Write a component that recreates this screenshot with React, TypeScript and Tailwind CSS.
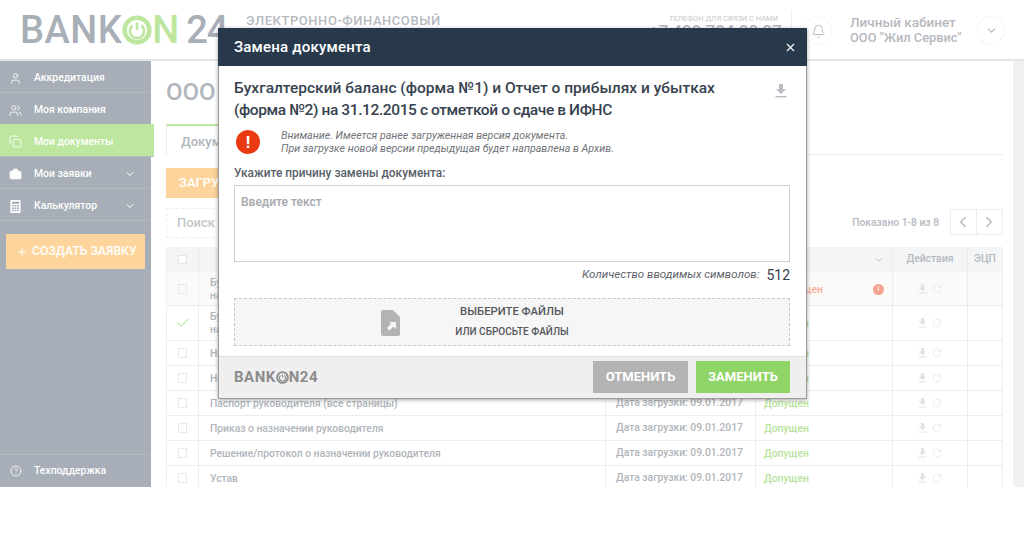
import { Bell, Briefcase, Check, ChevronDown, ChevronLeft, ChevronRight, CircleHelp, Copy, Plus, RotateCw, User, Users, X } from "lucide-react";

const FONT = "font-['Roboto','Noto_Sans',sans-serif]";

function DownloadIcon({ className }: { className?: string }) {
  return (
    <svg viewBox="0 0 12 14" className={className} fill="currentColor">
      <path d="M4 0h4v5h3L6 10 1 5h3z" />
      <rect x="0.5" y="12" width="11" height="1.4" />
    </svg>
  );
}

function PowerMark({ size, color }: { size: number; color: string }) {
  return (
    <svg width={size} height={size} viewBox="0 0 40 40" fill="none" stroke={color} className="shrink-0">
      <circle cx="20" cy="20" r="16.5" strokeWidth="6" />
      <path d="M14 14a9.5 9.5 0 1 0 12 0" strokeWidth="3.5" />
      <path d="M20 10v10" strokeWidth="3.5" />
    </svg>
  );
}

function BriefcaseSolid({ size }: { size: number }) {
  return <Briefcase size={size} strokeWidth={1.6} fill="currentColor" className="shrink-0" />;
}

function CalculatorSolid({ size }: { size: number }) {
  return (
    <svg width={size} height={size} viewBox="0 0 12 14" className="shrink-0" fill="currentColor">
      <path d="M1.5 0h9A1 1 0 0 1 11.500 1v12a1 1 0 0 1-1 1h-9a1 1 0 0 1-1-1V1a1 1 0 0 1 1-1z" />
      <rect x="2.200" y="1.800" width="7.600" height="2.400" fill="#a7aeb7" />
      <path d="M2.200 5.500h2v1.600h-2zM5 5.500h2v1.600H5zM7.800 5.500h2v1.600h-2zM2.200 8h2v1.600h-2zM5 8h2v1.600H5zM7.800 8h2v1.600h-2zM2.200 10.500h2v1.600h-2zM5 10.500h2v1.600H5zM7.800 10.500h2v1.600h-2z" fill="#a7aeb7" />
    </svg>
  );
}

const menu = [
  { label: "Аккредитация", icon: <User size={13} strokeWidth={1.6} className="shrink-0" />, h: "h-[32px]" },
  { label: "Моя компания", icon: <Users size={13} strokeWidth={1.6} className="shrink-0" />, h: "h-[32px]" },
  { label: "Мои документы", icon: <Copy size={13} strokeWidth={1.6} className="shrink-0" />, h: "h-[33px]", active: true },
  { label: "Мои заявки", icon: <BriefcaseSolid size={13} />, h: "h-[32px]", arrow: true },
  { label: "Калькулятор", icon: <CalculatorSolid size={13} />, h: "h-[32px]", arrow: true },
];

const rows = [
  { name: "Бухгалтерский баланс", sub: "на 31.12.2015", date: "", status: "Не допущен", h: "h-[34px]", tint: true },
  { name: "Бухгалтерский баланс", sub: "на 31.12.2015", date: "", status: "Допущен", h: "h-[35px]", checked: true },
  { name: "Налоговая декларация", date: "", status: "Допущен", h: "h-[25px]" },
  { name: "Налоговая декларация", date: "", status: "Допущен", h: "h-[25px]" },
  { name: "Паспорт руководителя (все страницы)", date: "Дата загрузки: 09.01.2017", status: "Допущен", h: "h-[25px]" },
  { name: "Приказ о назначении руководителя", date: "Дата загрузки: 09.01.2017", status: "Допущен", h: "h-[25px]" },
  { name: "Решение/протокол о назначении руководителя", date: "Дата загрузки: 09.01.2017", status: "Допущен", h: "h-[25px]" },
  { name: "Устав", date: "Дата загрузки: 09.01.2017", status: "Допущен", h: "h-[25px]" },
];

function Header() {
  return (
    <header className="h-[61px] shrink-0 flex border-b-2 border-[#e3e4e6] bg-white relative">
      <div className="w-[246px] shrink-0 pl-[20px] pt-[7px] flex items-center h-[52px] font-medium text-[38px] leading-none">
        <span className="text-[#a9afb7] tracking-[0.5px]">BANK</span>
        <PowerMark size={30} color="#bde69e" />
        <span className="text-[#bde69e]">N</span>
        <span className="text-[#a9afb7] ml-[7px] tracking-[-1px]">24</span>
      </div>
      <div className="pt-[13px] text-[13px] leading-[16px] tracking-[0.55px] text-[#b5b9bf] font-medium w-[240px]">
        ЭЛЕКТРОННО-ФИНАНСОВЫЙ
      </div>
      <div className="ml-auto flex">
        <div className="text-right w-[130px] pt-[14px] pr-[1px]">
          <div className="text-[7.5px] leading-[9px] text-[#c5c8cc]">ТЕЛЕФОН ДЛЯ СВЯЗИ С НАМИ</div>
          <div className="text-[17px] leading-[16px] font-medium text-[#b5b9bf] whitespace-nowrap">+7 499 704 00 07</div>
        </div>
        <div className="w-px h-[44px] bg-[#eee] mt-[10px] ml-[12px]" />
        <div className="w-[28px] h-[28px] rounded-full border border-dashed border-[#eee] mt-[17px] ml-[12px] flex items-center justify-center text-[#b5b9bf]">
          <Bell size={15} strokeWidth={1.5} />
        </div>
        <div className="w-[127px] ml-[18px] pt-[15px] leading-[15px] font-medium text-[#b5b9bf]">
          <div className="text-[13.5px]">Личный кабинет</div>
          <div className="text-[12.8px]">ООО "Жил Сервис"</div>
        </div>
        <div className="w-[28px] h-[28px] rounded-full border border-dashed border-[#eee] mt-[16px] mr-[19px] flex items-center justify-center text-[#b5b9bf]">
          <ChevronDown size={13} />
        </div>
      </div>
    </header>
  );
}

function Sidebar() {
  return (
    <aside className="w-[151px] shrink-0 bg-[#a7aeb7] flex flex-col text-white relative z-10">
      {menu.map((m) => (
        <div
          key={m.label}
          className={`${m.h} flex items-center pl-[9px] pr-[15px] pt-[3px] text-[10.4px] font-medium border-b border-[#b3b9c1] ${m.active ? "bg-[#bde69e] w-[154px] -mt-px" : ""}`}
        >
          {m.icon}
          <span className="ml-[12px]">{m.label}</span>
          {m.arrow && <ChevronDown size={12} className="ml-auto" />}
        </div>
      ))}
      <div className="mx-[6px] mt-[13px] h-[35px] w-[139px] bg-[#fdd49b] flex items-center pl-[10px] text-[12.200px] font-medium whitespace-nowrap">
        <Plus size={12} className="shrink-0" />
        <span className="ml-[4px]">СОЗДАТЬ ЗАЯВКУ</span>
      </div>
      <div className="mt-auto h-[33px] border-t border-[#b3b9c1] flex items-center pl-[10px] text-[10.4px] font-medium">
        <CircleHelp size={12} strokeWidth={1.6} />
        <span className="ml-[12px]">Техподдержка</span>
      </div>
    </aside>
  );
}

function DocumentsTable() {
  return (
    <div className="border-l border-r border-[#eeeff0] text-[10.300px]">
      <div className="h-[25px] flex bg-[#f4f5f6] text-[#b5b9bf] font-medium">
        <div className="w-[32px] flex items-center justify-center border-r border-[#e9eaeb]">
          <span className="w-[9px] h-[9px] bg-white border border-[#e6e6e6]" />
        </div>
        <div className="w-[407px] border-r border-[#e9eaeb]" />
        <div className="w-[150px] border-r border-[#e9eaeb]" />
        <div className="w-[137px] flex items-center justify-between pl-[8px] pr-[8px] border-r border-[#e9eaeb]">
          <span>Статус</span>
          <ChevronDown size={10} />
        </div>
        <div className="w-[75px] flex items-center justify-center border-r border-[#e9eaeb] pb-[1px]">Действия</div>
        <div className="flex-1 flex items-center justify-center pb-[1px]">ЭЦП</div>
      </div>
      {rows.map((r, i) => (
        <div key={i} className={`${r.h} flex border-b border-[#eceded] ${r.tint ? "bg-[#fbfaf9]" : "bg-white"}`}>
          <div className="w-[32px] flex items-center justify-center border-r border-[#eceded]">
            {r.checked ? (
              <Check size={16} strokeWidth={1.5} className="text-[#9fdd7f]" />
            ) : (
              <span className="w-[9px] h-[10px] border border-[#e9e9e9]" />
            )}
          </div>
          <div className="w-[407px] pl-[11px] flex flex-col justify-center text-[#b0b5bb] font-medium leading-[13px] border-r border-[#eceded]">
            <div>{r.name}</div>
            {r.sub && <div>{r.sub}</div>}
          </div>
          <div className="w-[150px] pl-[10px] flex items-center text-[#b0b5bb] font-medium border-r border-[#eceded] whitespace-nowrap">{r.date}</div>
          <div className={`w-[137px] pl-[8px] pr-[8px] pt-[2px] flex items-center justify-between font-medium border-r border-[#eceded] ${r.status === "Допущен" ? "text-[#b8e39c]" : "text-[#f6ab97]"}`}>
            <span>{r.status}</span>
            {r.status !== "Допущен" && (
              <span className="w-[11px] h-[11px] rounded-full bg-[#f3a38e] text-white text-[7px] leading-[11px] text-center">i</span>
            )}
          </div>
          <div className="w-[75px] flex items-center justify-center gap-[5px] text-[#dfe1e3] border-r border-[#eceded]">
            <DownloadIcon className="w-[9px] h-[10px]" />
            <RotateCw size={10} strokeWidth={1.5} />
          </div>
          <div className="flex-1" />
        </div>
      ))}
    </div>
  );
}

function Main() {
  return (
    <main className="flex-1 min-w-0 flex bg-[#f1f1f2]">
      <div className="w-[862px] shrink-0 bg-white pl-[15px] pr-[10px] overflow-hidden">
        <h1 className="mt-[16px] h-[30px] text-[24px] leading-[30px] font-medium text-[#b0b6bd] whitespace-nowrap">ООО "Жил Сервис"</h1>
        <div className="mt-[18px] h-[30px] flex items-end border-b border-[#eceded]">
          <div className="w-[110px] h-[31px] -mb-px bg-white border-t-2 border-l border-r border-t-[#bde69e] border-l-[#eceded] border-r-[#eceded] pl-[14px] pt-[6px] text-[13px] font-medium text-[#b0b6bd]">Документы</div>
        </div>
        <div className="mt-[13px] w-[200px] h-[30px] bg-[#fdd49b] text-white text-[13px] font-medium flex items-center pl-[13px]">ЗАГРУЗИТЬ ДОКУМЕНТ</div>
        <div className="mt-[10px] h-[30px] flex items-center">
          <div className="w-[400px] h-[30px] border border-dashed border-[#eceded] pl-[10px] flex items-center text-[13px] font-medium text-[#c2c6ca]">Поиск</div>
          <span className="ml-auto text-[10.300px] font-medium text-[#b5b9bf]">Показано 1-8 из 8</span>
          <div className="ml-[11px] w-[53px] h-[26px] -mt-[3px] border border-[#eceded] flex text-[#b5b9bf]">
            <div className="w-1/2 flex items-center justify-center border-r border-[#eceded]"><ChevronLeft size={18} /></div>
            <div className="w-1/2 flex items-center justify-center"><ChevronRight size={18} /></div>
          </div>
        </div>
        <div className="mt-[9px]">
          <DocumentsTable />
        </div>
      </div>
    </main>
  );
}

function ReplaceModal() {
  return (
    <div className="absolute left-[218px] top-[28px] w-[589px] h-[371px] bg-white flex flex-col border-x border-b border-[#9a9a9a] shadow-[0_1px_4px_rgba(0,0,0,0.35)]">
      <div className="h-[38px] shrink-0 bg-[#29394c] text-white flex items-center pl-[16px] pr-[10px] -mx-px">
        <span className="text-[15px] font-medium tracking-[0.2px]">Замена документа</span>
        <X size={13} strokeWidth={2} className="ml-auto" />
      </div>
      <div className="flex-1 pl-[15px] pr-[16px] min-h-0">
        <div className="mt-[11px] flex">
          <h2 className="w-[520px] text-[15.500px] leading-[22px] font-medium text-[#37424f] whitespace-nowrap">
            <div>Бухгалтерский баланс (форма №1) и Отчет о прибылях и убытках</div>
            <div className="tracking-[-0.4px]">(форма №2) на 31.12.2015 с отметкой о сдаче в ИФНС</div>
          </h2>
          <DownloadIcon className="w-[12px] h-[14px] ml-[21px] mt-[7px] text-[#b9bcc0]" />
        </div>
        <div className="mt-[8px] flex items-center pl-[2px]">
          <span className="w-[24px] h-[24px] rounded-full bg-[#ea3a14] text-white text-[17px] font-bold leading-[24px] text-center">!</span>
          <div className="ml-[21px] text-[10.700px] leading-[13px] italic text-[#6f7479]">
            <div>Внимание. Имеется ранее загруженная версия документа.</div>
            <div>При загрузке новой версии предыдущая будет направлена в Архив.</div>
          </div>
        </div>
        <div className="mt-[11px] text-[11.900px] leading-[14px] font-medium text-[#59616b]">Укажите причину замены документа:</div>
        <div className="mt-[5px] h-[77px] border border-[#cfcfcf] pl-[6px] pt-[8px] text-[12px] leading-[16px] font-medium text-[#a5a8ac]">Введите текст</div>
        <div className="mt-[5px] flex items-center justify-end h-[16px]">
          <span className="text-[11.500px] italic text-[#5d6268]">Количество вводимых символов:</span>
          <span className="ml-[7px] text-[14px] text-[#37424f]">512</span>
        </div>
        <div className="mt-[15px] h-[48px] border border-dashed border-[#c9c9c9] bg-[#f6f6f6] flex items-center relative">
          <svg viewBox="0 0 20 26" className="absolute left-[146px] top-[11px] w-[20px] h-[26px]" fill="#b3b3b3">
            <path d="M2 0h10l7 7v17a2 2 0 0 1-2 2H2a2 2 0 0 1-2-2V2a2 2 0 0 1 2-2z" />
            <path d="M8 12h7v7l-2.500-2.500-4 4-2.500-2.500 4-4z" fill="#f6f6f6" />
          </svg>
          <div className="w-full text-center leading-[20px] font-medium text-[#54585d]">
            <div className="text-[11.300px]">ВЫБЕРИТЕ ФАЙЛЫ</div>
            <div className="text-[10px]">ИЛИ СБРОСЬТЕ ФАЙЛЫ</div>
          </div>
        </div>
      </div>
      <div className="h-[42px] shrink-0 bg-[#efefef] border-t border-[#dedede] flex items-center pl-[15px] pr-[16px] pb-[1px]">
        <div className="flex items-center text-[15px] font-bold tracking-[0.5px] text-[#8c8c8c] leading-none">
          <span>BANK</span>
          <PowerMark size={13} color="#8c8c8c" />
          <span>N24</span>
        </div>
        <button className="ml-auto w-[95px] h-[32px] bg-[#b3b3b3] text-white text-[13px] font-bold">ОТМЕНИТЬ</button>
        <button className="ml-[8px] w-[94px] h-[32px] bg-[#90d568] text-white text-[13px] font-bold">ЗАМЕНИТЬ</button>
      </div>
    </div>
  );
}

export default function App() {
  return (
    <div className={`${FONT} relative h-[543px] w-[1024px] overflow-hidden bg-white`}>
      <div className="h-[487px] flex flex-col overflow-hidden">
        <Header />
        <div className="flex-1 min-h-0 flex">
          <Sidebar />
          <Main />
        </div>
      </div>
      <ReplaceModal />
    </div>
  );
}
